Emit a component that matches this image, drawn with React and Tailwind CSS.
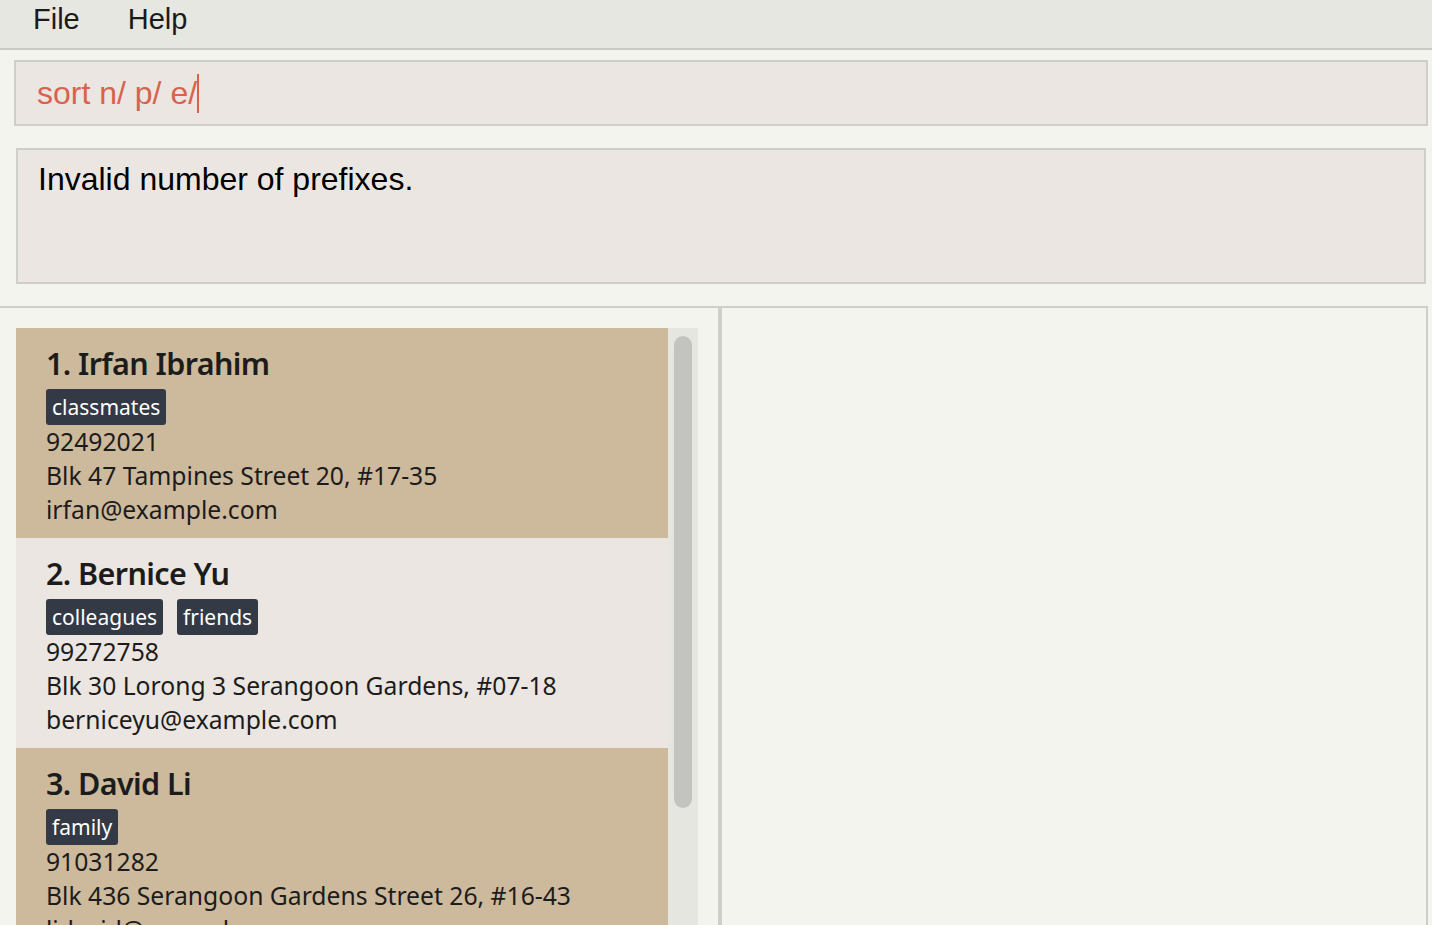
import React from 'react';

const persons = [
  {
    id: 1,
    name: 'Irfan Ibrahim',
    tags: ['classmates'],
    phone: '92492021',
    address: 'Blk 47 Tampines Street 20, #17-35',
    email: 'irfan@example.com',
  },
  {
    id: 2,
    name: 'Bernice Yu',
    tags: ['colleagues', 'friends'],
    phone: '99272758',
    address: 'Blk 30 Lorong 3 Serangoon Gardens, #07-18',
    email: 'berniceyu@example.com',
  },
  {
    id: 3,
    name: 'David Li',
    tags: ['family'],
    phone: '91031282',
    address: 'Blk 436 Serangoon Gardens Street 26, #16-43',
    email: 'lidavid@example.com',
  },
];

function PersonCard({ person, index }) {
  const bg = index % 2 === 0 ? 'bg-[#cdb99c]' : 'bg-[#ebe6e2]';
  return (
    <div className={`h-[210px] shrink-0 pl-[30px] pt-[14px] text-[#1c1c1c] ${bg}`}>
      <div className="text-[30.5px] font-semibold leading-[42px] tracking-[-0.6px]">
        {person.id}. {person.name}
      </div>
      <div className="mt-[5px] flex gap-[14px]">
        {person.tags.map((tag) => (
          <span
            key={tag}
            className="h-[36px] rounded-[3px] bg-[#333a45] px-[6px] text-[21px] leading-[36px] text-white"
          >
            {tag}
          </span>
        ))}
      </div>
      <div className="text-[24.7px] leading-[34px]">{person.phone}</div>
      <div className="text-[24.7px] leading-[34px]">{person.address}</div>
      <div className="text-[24.7px] leading-[34px]">{person.email}</div>
    </div>
  );
}

export default function App() {
  return (
    <div className="flex h-[925px] w-[1432px] flex-col overflow-hidden bg-[#f4f4ef] font-['Liberation_Sans',Arial,sans-serif]">
      {/* Menu bar */}
      <div className="flex h-[50px] shrink-0 gap-[48px] border-b-2 border-[#cacac5] bg-[#e7e7e2] pl-[33px] pt-[6px] text-[29px] leading-[26px] text-[#1a1a1a]">
        <span>File</span>
        <span>Help</span>
      </div>

      {/* Command box */}
      <div className="ml-[14px] mr-[4px] mt-[10px] flex h-[66px] shrink-0 items-center border-2 border-[#cfcfca] bg-[#ebe6e2] pl-[21px] text-[32px] leading-[62px] text-[#d8634d]">
        <span>sort n/ p/ e/</span>
        <span className="inline-block h-[39px] w-[2px] bg-[#d8634d]" />
      </div>

      {/* Result display */}
      <div className="ml-[16px] mr-[6px] mt-[22px] h-[136px] shrink-0 border-2 border-[#cfcfca] bg-[#ebe6e2] pl-[20px] pt-[11px] text-[32px] leading-[37px] text-black">
        Invalid number of prefixes.
      </div>

      {/* Panels */}
      <div className="mt-[22px] flex min-h-0 flex-1">
        <div className="flex w-[720px] shrink-0 border-t-2 border-r-2 border-[#cfcfca] pl-[16px] pt-[20px] font-['Noto_Sans',sans-serif]">
          <div className="flex w-[652px] flex-col">
            {persons.map((p, i) => (
              <PersonCard key={p.id} person={p} index={i} />
            ))}
          </div>
          <div className="w-[30px] bg-[#e6e6e1] px-[6px] pt-[8px]">
            <div className="h-[472px] rounded-full bg-[#c3c4bf]" />
          </div>
        </div>
        <div className="w-[708px] shrink-0 border-2 border-b-0 border-[#cfcfca]" />
      </div>
    </div>
  );
}
